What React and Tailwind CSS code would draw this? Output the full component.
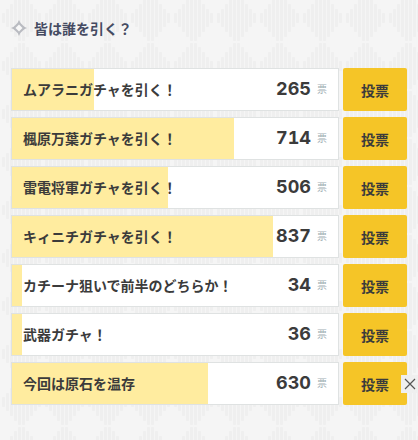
import React, { useState } from 'react';

const OPTIONS = [
  { id: 'mualani', label: 'ムアラニガチャを引く！', votes: 265, width: 25 },
  { id: 'kazuha', label: '楓原万葉ガチャを引く！', votes: 714, width: 68 },
  { id: 'raiden', label: '雷電将軍ガチャを引く！', votes: 506, width: 48 },
  { id: 'kinich', label: 'キィニチガチャを引く！', votes: 837, width: 80 },
  { id: 'kachina', label: 'カチーナ狙いで前半のどちらか！', votes: 34, width: 3 },
  { id: 'weapon', label: '武器ガチャ！', votes: 36, width: 3 },
  { id: 'save', label: '今回は原石を温存', votes: 630, width: 60 },
];

// half height of each vertical line in one diamond of the backdrop
const LINES = [5, 9, 14, 19, 23, 23, 19, 14, 9, 5];

const Backdrop = () => (
  <svg className="absolute inset-0 h-full w-full" aria-hidden="true">
    <defs>
      <pattern id="waves" x="0" y="-6" width="43" height="48" patternUnits="userSpaceOnUse">
        {LINES.map((half, i) => (
          <rect key={i} x={2 + i * 4} y={24 - half} width="3" height={half * 2} rx="1" fill="#efefef" />
        ))}
      </pattern>
    </defs>
    <rect width="100%" height="100%" fill="url(#waves)" />
  </svg>
);

const PollRow = ({ option, onVote }) => (
  <li className="flex gap-1">
    <div className="relative flex h-[43px] flex-1 items-center justify-between border border-[#dfe2e2] bg-white pr-[11px] pb-[2px] pl-[11px]">
      <div className="absolute inset-y-0 left-0 bg-[#ffec9f]" style={{ width: `${option.width}%` }} />
      <span className="relative text-sm font-bold whitespace-nowrap">{option.label}</span>
      <span className="relative flex items-center gap-[6px]">
        <span className="font-[Inter] text-lg font-bold tabular-nums">{option.votes}</span>
        <span className="text-[10px] text-[#9fb0b5]">票</span>
      </span>
    </div>
    <button
      type="button"
      onClick={() => onVote(option.id)}
      className="h-[43px] w-16 rounded-xs bg-[#f5c527] text-sm font-bold"
    >
      投票
    </button>
  </li>
);

const App = () => {
  const [options, setOptions] = useState(OPTIONS);
  const [showClose, setShowClose] = useState(true);

  const handleVote = (id) => {
    setOptions(options.map((o) => (o.id === id ? { ...o, votes: o.votes + 1 } : o)));
  };

  return (
    <main className="relative min-h-screen bg-[#f5f5f5] font-['Noto_Sans_CJK_JP',sans-serif] text-[#3b3b3b]">
      <Backdrop />
      <section className="relative px-[11px] pt-4">
        <h2 className="flex items-center gap-[7px] text-sm leading-6 font-bold text-[#454b62]">
          <svg width="16" height="16" viewBox="0 0 16 16" aria-hidden="true">
            <path
              fill="#b9bbc1"
              d="M8 0Q9.5 4 12 5.5Q13.5 7.2 16 8Q13.5 8.8 12 10.5Q9.5 12 8 16Q6.5 12 4 10.5Q2.5 8.8 0 8Q2.5 7.2 4 5.5Q6.5 4 8 0Z"
            />
            <path d="M8 4.5L11.5 8L8 11.5L4.5 8Z" fill="#f8f8f8" />
          </svg>
          皆は誰を引く？
        </h2>
        <ul className="mt-7 flex flex-col gap-[6px]">
          {options.map((option) => (
            <PollRow key={option.id} option={option} onVote={handleVote} />
          ))}
        </ul>
      </section>
      {showClose && (
        <button
          type="button"
          aria-label="閉じる"
          onClick={() => setShowClose(false)}
          className="absolute top-[375px] right-0 flex h-[18px] w-[17px] items-center justify-center bg-[#efefef]"
        >
          <svg width="12" height="12" viewBox="0 0 12 12" aria-hidden="true">
            <path d="M1 1L11 11M11 1L1 11" stroke="#555" strokeWidth="1.2" />
          </svg>
        </button>
      )}
    </main>
  );
};

export default App;
